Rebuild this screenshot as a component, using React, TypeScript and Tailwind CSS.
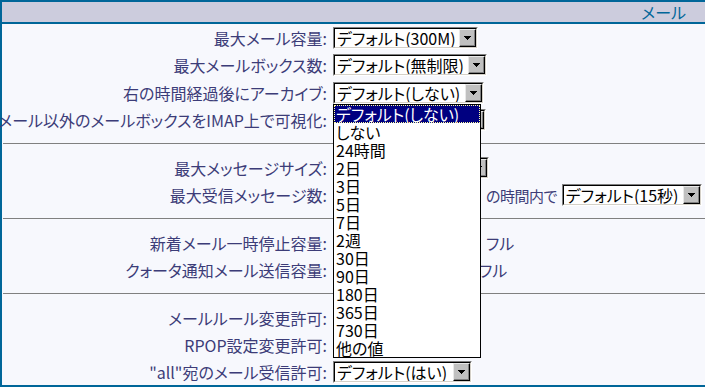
import React from "react";

type SelectProps = {
  value?: string;
  className: string;
};

const Select = ({ value = "", className }: SelectProps) => (
  <div
    className={`flex h-[22px] shrink-0 border border-b-white border-l-[#808080] border-r-white border-t-[#808080] ${className}`}
  >
    <div className="flex min-w-0 flex-1 border border-b-[#d4d0c8] border-l-black border-r-[#d4d0c8] border-t-black bg-white">
      <span className="min-w-0 flex-1 overflow-hidden whitespace-nowrap pl-[2px] text-[16px] leading-[18px] text-black">
        {value}
      </span>
      <span className="flex w-[17px] shrink-0 items-center justify-center border border-b-black border-l-[#e8e8e8] border-r-black border-t-[#e8e8e8] bg-[#c0c0c0] shadow-[inset_-1px_-1px_0_#808080]">
        <svg width="7" height="4" viewBox="0 0 7 4" shapeRendering="crispEdges">
          <polygon points="0,0 7,0 3.5,4" fill="black" />
        </svg>
      </span>
    </div>
  </div>
);

interface RowProps {
  label: string;
  tall?: boolean;
  children?: React.ReactNode;
}

const Row = ({ label, tall = true, children }: RowProps) => (
  <div className={`flex items-center ${tall ? "h-[27.5px]" : "h-[27px]"}`}>
    <div className="flex w-[325px] shrink-0 justify-end whitespace-nowrap text-[#3c3c78]">
      <span>{label}</span>
    </div>
    <div className="ml-[6px] flex items-center">{children}</div>
  </div>
);

const Separator = () => (
  <div className="pb-[10px] pl-[1px] pt-[9px]">
    <div className="h-px bg-[#808080]" />
  </div>
);

const options = [
  "デフォルト(しない)",
  "しない",
  "24時間",
  "2日",
  "3日",
  "5日",
  "7日",
  "2週",
  "30日",
  "90日",
  "180日",
  "365日",
  "730日",
  "他の値",
];

const App = () => {
  return (
    <div className="relative h-[388px] w-[705px] overflow-hidden bg-white font-['Noto_Sans_CJK_JP',sans-serif] text-[16px] leading-none [font-feature-settings:'palt']">
      <div className="border-l-2 border-[#006699]">
        <div className="flex h-[24px] items-center justify-end border-y-2 border-[#006699] bg-[#ccccdd] pr-[19px] text-[#006699]">
          メール
        </div>
        <div className="border-b-2 border-[#006699] bg-[#f7f8fd]">
          <Row label="最大メール容量:">
            <Select value="デフォルト(300M)" className="w-[145px]" />
          </Row>
          <Row label="最大メールボックス数:">
            <Select value="デフォルト(無制限)" className="w-[154px]" />
          </Row>
          <Row label="右の時間経過後にアーカイブ:">
            <Select value="デフォルト(しない)" className="w-[151px]" />
          </Row>
          <Row label="メール以外のメールボックスをIMAP上で可視化:">
            <Select className="w-[153px]" />
          </Row>
          <Separator />
          <Row label="最大メッセージサイズ:">
            <Select className="w-[156px]" />
          </Row>
          <Row label="最大受信メッセージ数:">
            <Select className="w-[146px]" />
            <span className="ml-[7px] whitespace-nowrap text-[15px] tracking-[-0.5px] text-[#3c3c78]">
              の時間内で
            </span>
            <Select value="デフォルト(15秒)" className="ml-[5px] w-[140px]" />
          </Row>
          <Separator />
          <Row label="新着メール一時停止容量:">
            <Select className="w-[145px]" />
            <span className="ml-[8px] text-[#3c3c78]">フル</span>
          </Row>
          <Row label="クォータ通知メール送信容量:">
            <Select className="w-[140px]" />
            <span className="ml-[6px] text-[#3c3c78]">フル</span>
          </Row>
          <Separator />
          <Row label="メールルール変更許可:" tall={false}>
            <Select className="w-[140px]" />
          </Row>
          <Row label="RPOP設定変更許可:" tall={false}>
            <Select className="w-[140px]" />
          </Row>
          <Row label={'"all"宛のメール受信許可:'} tall={false}>
            <Select value="デフォルト(はい)" className="w-[139px]" />
          </Row>
        </div>
      </div>

      <ul className="absolute left-[333px] top-[104px] w-[148px] border border-black bg-white text-black">
        {options.map((option, i) => (
          <li
            key={option}
            className={`h-[18px] whitespace-nowrap pl-[2px] leading-[18px] ${
              i === 0
                ? "bg-[#000080] text-white outline-1 -outline-offset-1 outline-dotted outline-[#ffffa0]"
                : ""
            }`}
          >
            {option}
          </li>
        ))}
      </ul>
    </div>
  );
};

export default App;
